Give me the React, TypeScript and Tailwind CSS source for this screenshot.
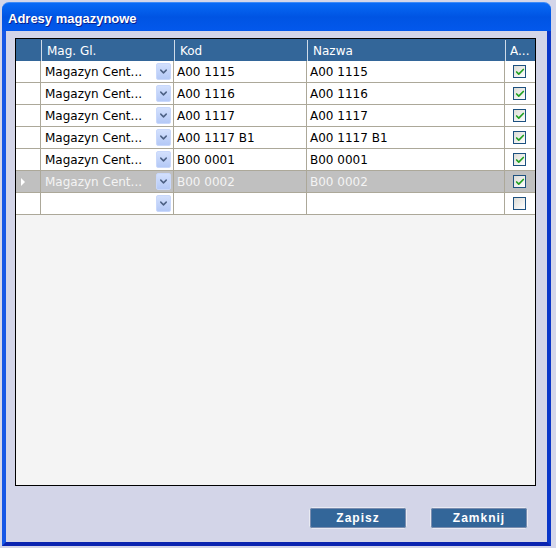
import { Check, ChevronDown } from "lucide-react";

const rows = [
  { mag: "Magazyn Cent...", kod: "A00 1115", nazwa: "A00 1115", a: true },
  { mag: "Magazyn Cent...", kod: "A00 1116", nazwa: "A00 1116", a: true },
  { mag: "Magazyn Cent...", kod: "A00 1117", nazwa: "A00 1117", a: true },
  { mag: "Magazyn Cent...", kod: "A00 1117 B1", nazwa: "A00 1117 B1", a: true },
  { mag: "Magazyn Cent...", kod: "B00 0001", nazwa: "B00 0001", a: true },
  { mag: "Magazyn Cent...", kod: "B00 0002", nazwa: "B00 0002", a: true, selected: true },
  { mag: "", kod: "", nazwa: "", a: false },
];

function DropBtn() {
  return (
    <span className="w-[15px] h-[17px] rounded-[2px] bg-gradient-to-b from-[#d3e0fd] to-[#b4c9f6] border border-[#c9d8fb] flex items-center justify-center">
      <ChevronDown className="size-[11px] text-[#4d6185]" strokeWidth={3.2} />
    </span>
  );
}

function CheckBox({ checked }: { checked: boolean }) {
  return (
    <span className="w-[13px] h-[13px] border border-[#1c5180] bg-gradient-to-br from-[#dcdcd6] to-white flex items-center justify-center">
      {checked && <Check className="size-[10px] text-[#21a121]" strokeWidth={4} />}
    </span>
  );
}

export default function App() {
  const btn =
    "w-[98px] h-[22px] rounded-[3px] border border-[#e8eaf2] outline outline-1 outline-[#7a8db0] -outline-offset-2 bg-[#336699] text-white font-bold text-[12px] tracking-[1px] font-['Liberation_Sans',sans-serif]";
  return (
    <div className="w-[556px] h-[548px] bg-[#d4d6e9] p-[2px] font-['DejaVu_Sans',sans-serif]">
      <div className="w-[549px] h-[544px] flex flex-col">
        <div className="h-[29px] rounded-t-[7px] bg-gradient-to-b from-[#0a6af6] via-[#0054e3] to-[#0358ec] border-t border-[#3d8af7] flex items-center pt-[4px] px-[6px]">
          <span className="text-white font-bold text-[13px] font-['Liberation_Sans',sans-serif] [text-shadow:1px_1px_0_#0a1e8c]">Adresy magazynowe</span>
        </div>
        <div className="flex-1 flex flex-col bg-[#d3d5e8] border-l-[4px] border-r-[4px] border-b-[4px] border-l-[#1657e6] border-r-[#0a36c8] border-b-[#0a24b0] px-[9px] pt-[7px]">
          <div className="w-[521px] h-[448px] border border-black bg-[#f4f4f4] text-[12px]">
            <div className="h-[22px] flex bg-[#336699] text-white pt-px">
              <div className="w-[25px]" />
              <div className="w-[133px] border-l border-[#d0dbe8] pl-[5px] flex items-center">Mag. Gl.</div>
              <div className="w-[133px] border-l border-[#d0dbe8] pl-[5px] flex items-center">Kod</div>
              <div className="w-[198px] border-l border-[#d0dbe8] pl-[5px] flex items-center">Nazwa</div>
              <div className="w-[30px] border-l border-[#d0dbe8] pl-[4px] flex items-center">A...</div>
            </div>
            {rows.map((r, i) => (
              <div
                key={i}
                className={`h-[22px] flex border-b border-[#aca899] ${r.selected ? "bg-[#c0c0c0] text-[#f4f4f4]" : "bg-white text-black"}`}
              >
                <div className="w-[25px] border-r border-[#aca899] flex items-center pl-[5px]">
                  {r.selected && <span className="w-0 h-0 border-y-[4px] border-y-transparent border-l-[4px] border-l-white" />}
                </div>
                <div className="w-[133px] border-r border-[#aca899] flex items-center justify-between pl-[4px] pr-[2px]">
                  <span className="pt-px">{r.mag}</span>
                  <DropBtn />
                </div>
                <div className="w-[133px] border-r border-[#aca899] flex items-center pl-[3px] pt-px">{r.kod}</div>
                <div className="w-[198px] border-r border-[#aca899] flex items-center pl-[3px] pt-px">{r.nazwa}</div>
                <div className="w-[29px] flex items-center justify-center">
                  <CheckBox checked={r.a} />
                </div>
              </div>
            ))}
          </div>
          <div className="flex justify-end gap-[23px] pr-[10px] pt-[21px]">
            <button className={btn}>Zapisz</button>
            <button className={btn}>Zamknij</button>
          </div>
        </div>
      </div>
    </div>
  );
}
